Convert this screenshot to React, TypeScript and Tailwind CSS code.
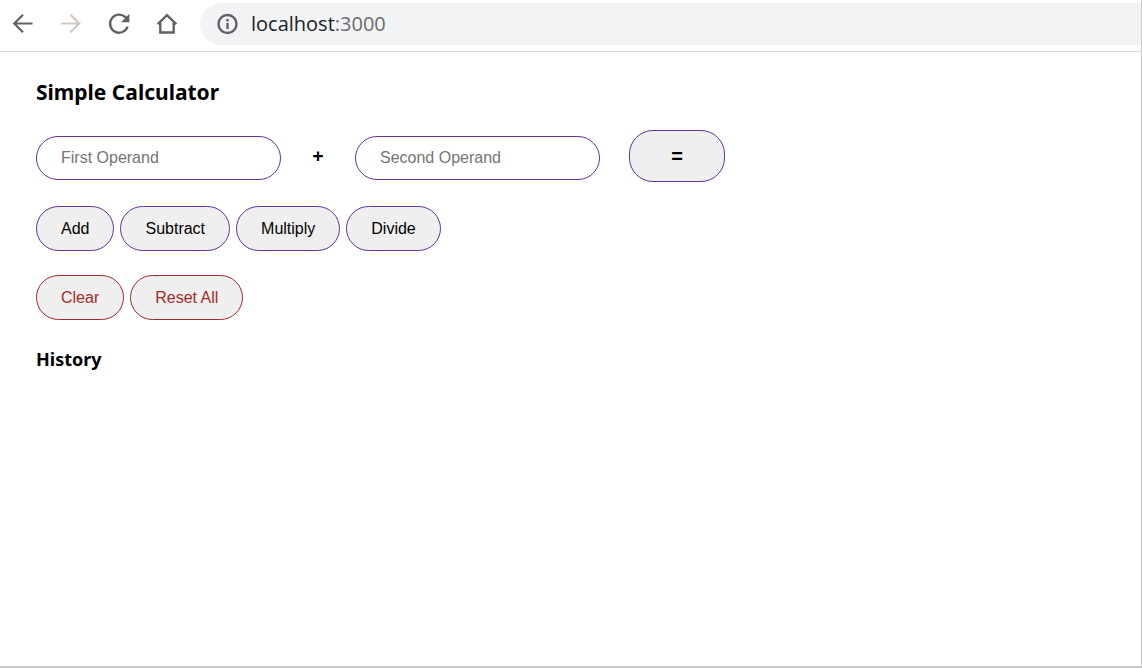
import { useState } from 'react';

type Operator = '+' | '-' | '*' | '/';

const operations: { label: string; operator: Operator }[] = [
  { label: 'Add', operator: '+' },
  { label: 'Subtract', operator: '-' },
  { label: 'Multiply', operator: '*' },
  { label: 'Divide', operator: '/' },
];

function calculate(a: number, b: number, operator: Operator): number {
  switch (operator) {
    case '+':
      return a + b;
    case '-':
      return a - b;
    case '*':
      return a * b;
    case '/':
      return a / b;
  }
}

const navButton = 'flex size-6 items-center justify-center text-[#655f68]';
const field =
  'h-11 w-[245px] rounded-3xl border border-[#663399] bg-white px-6 text-base text-black placeholder:text-[#757575] placeholder:opacity-100';
const pill = 'h-[45px] rounded-3xl border bg-[#efefef] px-6 text-base';

function BrowserBar() {
  return (
    <header className="flex h-[52px] items-start border-b border-[#d5d5d5] bg-white pt-[3px] pl-[11px]">
      <nav aria-label="Browser" className="flex h-[42px] shrink-0 items-center gap-6">
        <button type="button" aria-label="Back" className={navButton}>
          <svg viewBox="0 0 24 24" className="size-6" fill="none" stroke="currentColor" strokeWidth="2.2">
            <path d="M21.5 11.5H3.5M12 2.8 3.2 11.5l8.8 8.8" />
          </svg>
        </button>
        <button type="button" aria-label="Forward" className="flex size-6 items-center justify-center text-[#d2c8c3]">
          <svg viewBox="0 0 24 24" className="size-6" fill="none" stroke="currentColor" strokeWidth="2.2">
            <path d="M2 11.5h18M11.5 2.8l8.8 8.7-8.8 8.8" />
          </svg>
        </button>
        <button type="button" aria-label="Reload" className={navButton}>
          <svg viewBox="0 0 24 24" className="size-6" fill="none">
            <path d="M20.6 14.6A9 9 0 1 1 18.4 5.2L20 6.8" stroke="currentColor" strokeWidth="2.4" />
            <path d="M22.4 1.8v8.4H14z" fill="currentColor" />
          </svg>
        </button>
        <button type="button" aria-label="Home" className={navButton}>
          <svg viewBox="0 0 24 24" className="size-6" fill="none" stroke="currentColor" strokeWidth="2.4">
            <path d="M2.7 12.2 12 3.2l9.3 9M5.3 10.5v10h13.4v-10" />
          </svg>
        </button>
      </nav>
      <div className="ml-[21px] flex h-[42px] min-w-0 flex-1 items-center gap-3 rounded-l-full bg-[#f1f3f4] pl-[17px]">
        <svg viewBox="0 0 22 22" className="size-[22px] shrink-0" fill="none" stroke="#655f68" strokeWidth="2.4" aria-hidden="true">
          <circle cx="10.5" cy="11" r="9" />
          <path d="M10.5 10v6M10.5 6v2.4" />
        </svg>
        <p className="font-['Open_Sans','Noto_Sans',sans-serif] text-xl text-[#202124]">
          localhost<span className="text-[#6a6c70]">:3000</span>
        </p>
      </div>
    </header>
  );
}

export default function App() {
  const [first, setFirst] = useState('');
  const [second, setSecond] = useState('');
  const [operator, setOperator] = useState<Operator>('+');
  const [history, setHistory] = useState<string[]>([]);

  const clear = () => {
    setFirst('');
    setSecond('');
  };

  const reset = () => {
    clear();
    setOperator('+');
    setHistory([]);
  };

  const submit = () => {
    if (first === '' || second === '') return;
    const result = calculate(Number(first), Number(second), operator);
    setHistory([...history, `${first} ${operator} ${second} = ${result}`]);
  };

  return (
    <div className="flex min-h-screen flex-col border-r border-b-2 border-[#c8c8c8] bg-white font-['Liberation_Sans',Arial,sans-serif] text-black">
      <BrowserBar />
      <main className="px-9 pt-6">
        <h2 className="font-['Noto_Sans',sans-serif] text-[21px] leading-8 font-bold">Simple Calculator</h2>
        <div className="mt-[22px] flex items-baseline">
          <input
            aria-label="First Operand"
            placeholder="First Operand"
            inputMode="decimal"
            className={field}
            value={first}
            onChange={(e) => setFirst(e.target.value)}
          />
          <span className="w-[74px] text-center font-['Noto_Sans',sans-serif] text-xl font-bold">{operator}</span>
          <input
            aria-label="Second Operand"
            placeholder="Second Operand"
            inputMode="decimal"
            className={field}
            value={second}
            onChange={(e) => setSecond(e.target.value)}
          />
          <button
            type="button"
            aria-label="Equals"
            onClick={submit}
            className="ml-[29px] h-[52px] w-24 rounded-3xl border border-[#663399] bg-[#efefef] text-xl font-bold"
          >
            =
          </button>
        </div>
        <div className="mt-6 flex gap-1.5">
          {operations.map((item) => (
            <button
              key={item.label}
              type="button"
              onClick={() => setOperator(item.operator)}
              className={`${pill} border-[#663399]`}
            >
              {item.label}
            </button>
          ))}
        </div>
        <div className="mt-6 flex gap-1.5">
          <button type="button" onClick={clear} className={`${pill} border-[#a52a2a] text-[#a52a2a]`}>
            Clear
          </button>
          <button type="button" onClick={reset} className={`${pill} border-[#a52a2a] text-[#a52a2a]`}>
            Reset All
          </button>
        </div>
        <h3 className="mt-6 font-['Noto_Sans',sans-serif] text-lg leading-[30px] font-bold">History</h3>
        <ul>
          {history.map((entry, index) => (
            <li key={index}>{entry}</li>
          ))}
        </ul>
      </main>
    </div>
  );
}
